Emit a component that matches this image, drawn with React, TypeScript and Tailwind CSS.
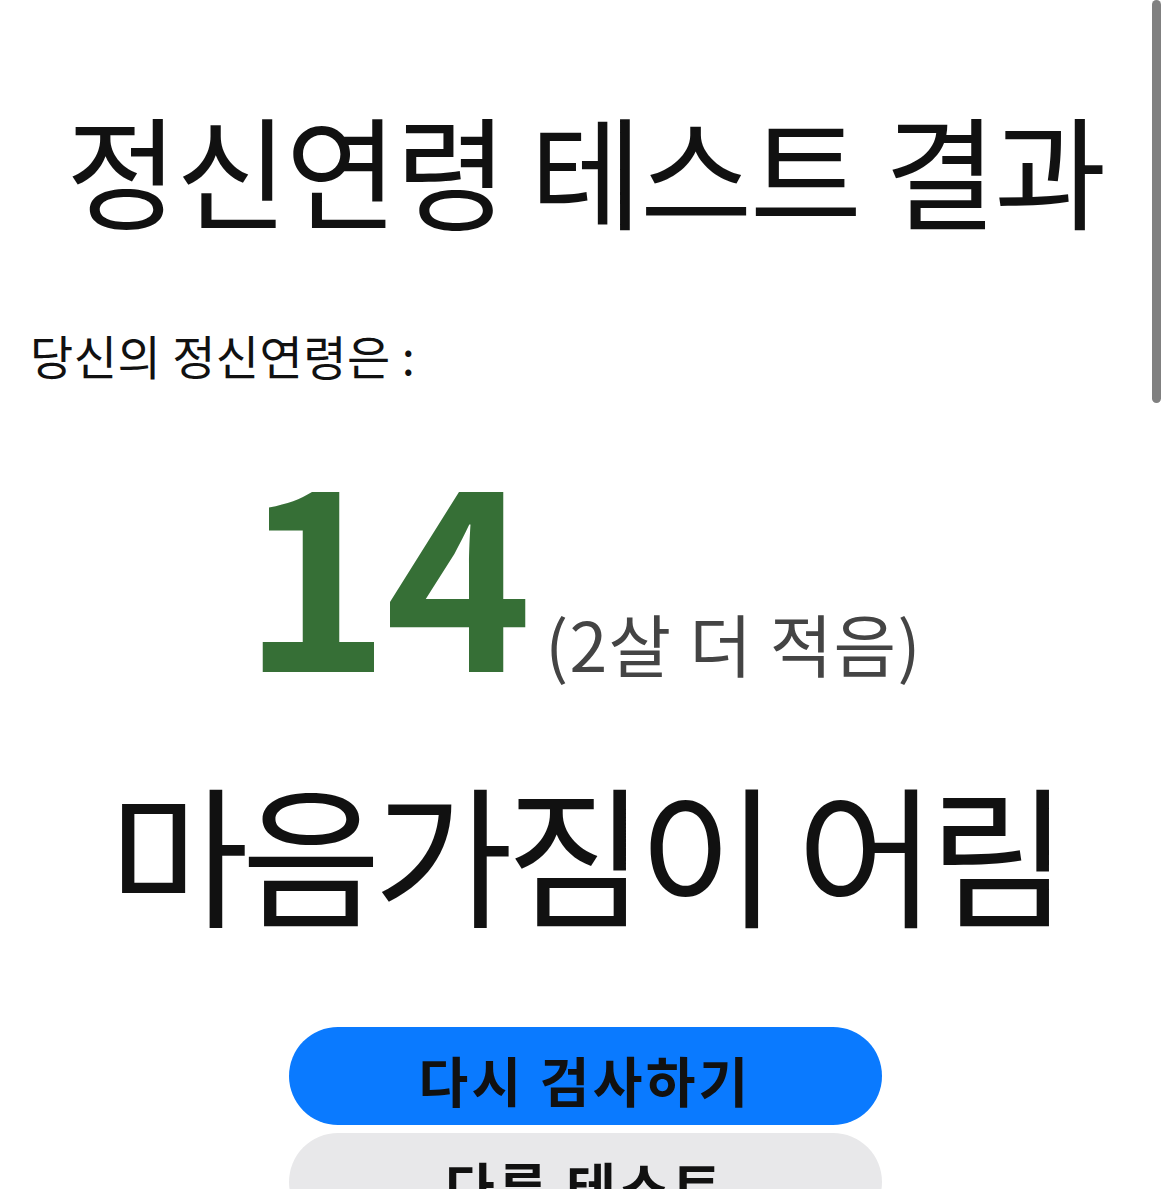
export default function App() {
  return (
    <div
      className="relative min-h-screen bg-white text-[#111]"
      style={{ fontFamily: '"Noto Sans CJK KR", "Noto Sans", sans-serif' }}
    >
      {/* iOS-style scroll indicator */}
      <div className="fixed right-[9px] top-0 h-[403px] w-[9px] rounded-full bg-[#808080]" />

      <div className="px-[30px] pt-[106px]">
        <h1 className="text-center text-[122px] font-normal leading-none tracking-[-0.02em]">
          정신연령 테스트 결과
        </h1>

        <p className="mt-[103px] text-[47px] leading-none tracking-[0.01em]">
          당신의 정신연령은 :
        </p>

        <div className="mt-[60px] flex items-baseline justify-center pr-[6px]">
          <span className="text-[250px] font-bold leading-none tracking-[-0.02em] text-[#366f36]">
            14
          </span>
          <span className="ml-[18px] text-[68px] leading-none tracking-[0.02em] text-[#444]">
            (2살 더 적음)
          </span>
        </div>

        <div className="mt-[86px] text-center text-[152px] leading-none tracking-[-0.05em]">
          마음가짐이 어림
        </div>

        <div className="mt-[101px] flex flex-col items-center gap-[8px]">
          <button className="h-[98px] w-[593px] rounded-full bg-[#0a7aff] pt-[8px] text-[54px] font-bold leading-none tracking-[0.06em] text-[#111]">
            다시 검사하기
          </button>
          <button className="h-[98px] w-[593px] rounded-full bg-[#e8e8ea] pt-[8px] text-[54px] font-bold leading-none tracking-[0.06em] text-[#111]">
            다른 테스트
          </button>
        </div>
      </div>
    </div>
  );
}
